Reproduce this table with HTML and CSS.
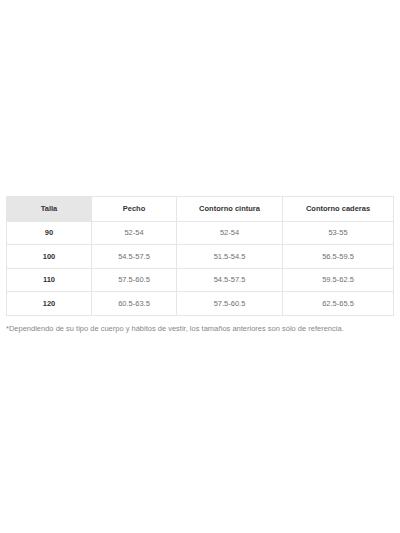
FILE: index.html
```html
<!DOCTYPE html>
<html>
<head>
<meta charset="utf-8">
<link rel="stylesheet" href="styles.css">
</head>
<body>
<div class="page">
  <table class="size-table">
    <colgroup>
      <col class="c1"><col class="c2"><col class="c3"><col class="c4">
    </colgroup>
    <tr class="head">
      <th class="shaded">Talla</th>
      <th>Pecho</th>
      <th>Contorno cintura</th>
      <th>Contorno caderas</th>
    </tr>
    <tr><th>90</th><td>52-54</td><td>52-54</td><td>53-55</td></tr>
    <tr><th>100</th><td>54.5-57.5</td><td>51.5-54.5</td><td>56.5-59.5</td></tr>
    <tr><th>110</th><td>57.5-60.5</td><td>54.5-57.5</td><td>59.5-62.5</td></tr>
    <tr><th>120</th><td>60.5-63.5</td><td>57.5-60.5</td><td>62.5-65.5</td></tr>
  </table>
  <p class="note">*Dependiendo de su tipo de cuerpo y hábitos de vestir, los tamaños anteriores son sólo de referencia.</p>
</div>
</body>
</html>
```
FILE: styles.css
```css
html, body {
  margin: 0;
  padding: 0;
  background: #fff;
}
body {
  font-family: "Liberation Sans", Arial, sans-serif;
}
.page {
  padding: 196px 7px 0 6px;
}
.size-table {
  width: 387px;
  border-collapse: collapse;
  table-layout: fixed;
  font-size: 7.5px;
}
.size-table th,
.size-table td {
  border: 1px solid #e6e6e6;
  text-align: center;
  height: 23.5px;
  padding: 0;
  box-sizing: border-box;
}
.size-table th {
  color: #333;
  font-weight: bold;
}
.size-table td {
  color: #6f6f6f;
}
.size-table .head th {
  height: 24.5px;
}
.c1 { width: 85px; }
.c2 { width: 85px; }
.c3 { width: 106px; }
.c4 { width: 111px; }
.shaded {
  background: #e6e6e6;
}
.note {
  margin: 8px 0 0 0;
  font-size: 7.5px;
  color: #888;
}
```
